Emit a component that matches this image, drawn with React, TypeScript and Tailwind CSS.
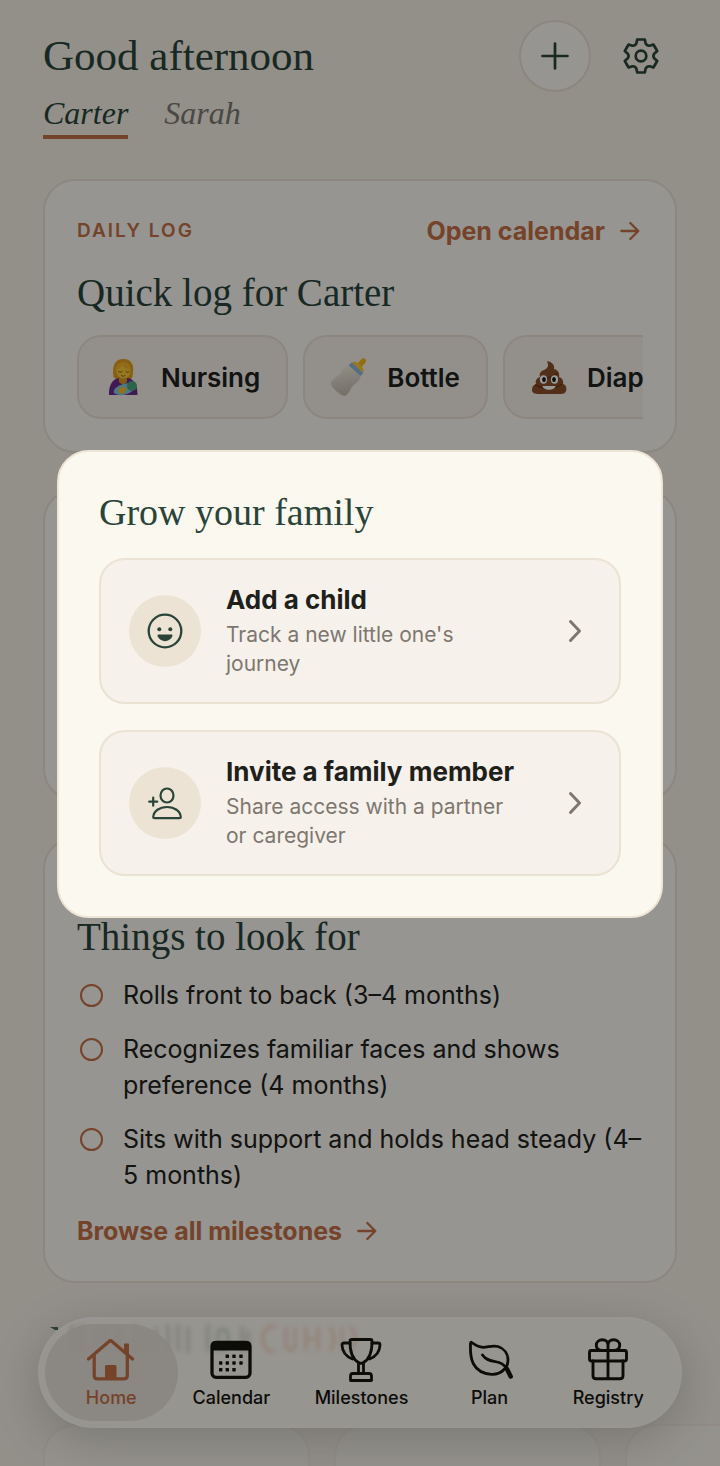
import type { ReactNode } from "react";

const SERIF = "font-['Georgia','Liberation_Serif',serif]";

const MILESTONES = [
  "Rolls front to back (3–4 months)",
  "Recognizes familiar faces and shows preference (4 months)",
  "Sits with support and holds head steady (4–5 months)",
];

function NursingIcon() {
  return (
    <svg viewBox="0 0 36 40" className="h-10 w-9 shrink-0" aria-hidden="true">
      <path d="M8.500 20C7 9 9.500 2 18.500 2c8 0 10.500 6 9.500 13 0 4-1 7-3 8H12z" fill="#e0a01c" />
      <path d="M4 38c-.5-9 3-16 10-17h9c6 1 9.500 7 9.500 17z" fill="#6c2c8c" />
      <path d="M14 18h8v7l-4 3-4-3z" fill="#d9991a" />
      <ellipse cx="18.500" cy="13.500" rx="7" ry="8" fill="#fbc93a" />
      <path d="M10 14c1-7 5-9 9-9 3 0 6 2 7 7-5 0-8-2-9-4-1 3-4 5-7 6z" fill="#f0b42c" />
      <path d="M13.500 14.500c1 1 2.500 1 3.500 0m4 0c1 1 2 1 3 0m-7.500 4c1 1 2.500 1 3.500 0" fill="none" stroke="#8a5512" strokeWidth="1" strokeLinecap="round" />
      <path d="M9 36c-2-4 5-9 15-10l4 7c-4 5-14 7-19 3z" fill="#7fc9dc" />
      <circle cx="27" cy="29" r="5" fill="#4fa37c" />
      <path d="M13 34c2-4 6-5 8-3 1 2-2 6-5 6z" fill="#f7bc2c" />
    </svg>
  );
}

function BottleIcon() {
  return (
    <svg viewBox="1 1 34 38" className="h-10 w-9 shrink-0" aria-hidden="true">
      <defs>
        <linearGradient id="milk" x1="0" y1="0" x2="1" y2="1">
          <stop offset="0" stopColor="#f3eee2" />
          <stop offset="1" stopColor="#bdb6a8" />
        </linearGradient>
      </defs>
      <g transform="rotate(42 18 20)">
        <path d="M15.500 0c0-4 5-4 5 0v5h-5z" fill="#f6b51e" />
        <path d="M11 8c0-5 14-5 14 0z" fill="#ffc930" />
        <path d="M10.500 8h15v5h-15z" fill="#8cb8d8" />
        <path d="M10.500 12h15c3 4 1 7 1 12 0 3 2 7 1 11-1 4-18 4-19 0-1-4 1-8 1-11 0-5-2-8 1-12z" fill="url(#milk)" />
      </g>
    </svg>
  );
}

function DiaperIcon() {
  return (
    <svg viewBox="0 0 36 40" className="h-10 w-9 shrink-0" aria-hidden="true">
      <path
        d="M16 4c5 1 8 4 7 8 4 1 6 4 5 8 3 1 5 4 4 7 3 1 4 4 3 7-1 3-4 3-7 3H8c-4 0-7-1-7-4s1-5 4-6c-1-4 1-6 4-7-1-4 1-6 4-7 4-2 5-4 3-9z"
        fill="#8a4d28"
      />
      <path d="M9 20c5 2 13 1 17-4m-22 12c8 4 20 4 27-1" fill="none" stroke="#6b3618" strokeWidth="1.500" />
      <ellipse cx="12.500" cy="22.500" rx="3.600" ry="4.200" fill="#fff" />
      <ellipse cx="23.500" cy="22.500" rx="3.600" ry="4.200" fill="#fff" />
      <ellipse cx="13" cy="22.500" rx="1.800" ry="2.500" fill="#111" />
      <ellipse cx="23" cy="22.500" rx="1.800" ry="2.500" fill="#111" />
      <path d="M11.500 29h13c-1 5-12 5-13 0z" fill="#fff" />
    </svg>
  );
}

function ArrowRight() {
  return (
    <svg viewBox="0 0 24 24" className="size-6 shrink-0" fill="none" stroke="currentColor" strokeWidth="2.300" strokeLinecap="round" strokeLinejoin="round" aria-hidden="true">
      <path d="M2.300 12h16.700M11.300 4l8 8-8 8" />
    </svg>
  );
}

function Chevron() {
  return (
    <svg viewBox="0 0 32 32" className="size-8 shrink-0 text-[#7d7770]" fill="none" stroke="currentColor" strokeWidth="3" strokeLinecap="round" strokeLinejoin="round" aria-hidden="true">
      <path d="M11.500 6.500 20.500 16l-9 9.500" />
    </svg>
  );
}

function GearIcon() {
  return (
    <svg viewBox="-20 -20 40 40" className="size-10" fill="none" stroke="currentColor" strokeWidth="2.700" strokeLinejoin="round" aria-hidden="true">
      <path d="M-3.800-16.500H3.800L4.600-12.700Q5.800-10 8.700-10.300L12.400-11.500 16.200-5 13.200-2.300Q11.600 0 13.200 2.300L16.200 5 12.400 11.500 8.700 10.300Q5.800 10 4.600 12.700L3.800 16.500H-3.800L-4.600 12.700Q-5.800 10-8.700 10.300L-12.400 11.500-16.200 5-13.200 2.300Q-11.600 0-13.200-2.300L-16.200-5-12.400-11.500-8.700-10.300Q-5.800-10-4.600-12.700Z" />
      <circle r="5.300" />
    </svg>
  );
}

function SmileIcon() {
  return (
    <svg viewBox="-20 -20 40 40" className="size-10" aria-hidden="true">
      <circle r="16.300" fill="none" stroke="currentColor" strokeWidth="2.300" />
      <circle cx="-5.700" cy="-1.800" r="2" fill="currentColor" />
      <circle cx="5.300" cy="-1.800" r="2" fill="currentColor" />
      <path d="M-6.800 3.500H6.800C7.800 3.500 7.500 5 7 6 4 11.500-4 11.500-7 6-7.500 5-7.800 3.500-6.800 3.500Z" fill="currentColor" />
    </svg>
  );
}

function InviteIcon() {
  return (
    <svg viewBox="-20 -20 40 40" className="size-10" fill="none" stroke="currentColor" strokeWidth="2.200" strokeLinecap="round" strokeLinejoin="round" aria-hidden="true">
      <ellipse cx="2" cy="-7.500" rx="6.500" ry="7" />
      <path d="M-10.500 15.200H14.500Q15.800 15.200 15.800 14C15.300 8 9.500 4 2 4S-11.300 8-11.800 14Q-11.800 15.200-10.500 15.200Z" />
      <path d="M-15.800-1.300h8M-11.800-5.300v8" />
    </svg>
  );
}

function NavIcon({ children }: { children: ReactNode }) {
  return (
    <svg viewBox="0 0 48 48" className="size-12" fill="none" stroke="currentColor" strokeWidth="3.300" strokeLinecap="round" strokeLinejoin="round" aria-hidden="true">
      {children}
    </svg>
  );
}

const CALENDAR_DOTS = [
  [20.3, 20.3], [27, 20.3], [34, 20.3],
  [13.7, 27], [20.3, 27], [27, 27], [34, 27],
  [13.7, 33.7], [20.3, 33.7], [27, 33.7],
];

const NAV_ITEMS = [
  {
    label: "Home",
    icon: (
      <NavIcon>
        <path d="M1.500 23 22 5.500Q23.500 4 25 5.500L45.500 23" />
        <path d="M7.200 19.500V39.500Q7.200 42.800 10.500 42.800H37Q40.300 42.800 40.300 39.500V19.500" />
        <path d="M37 8.500q0-1 1-1h3q1 0 1 1V19L37 14.500z" fill="currentColor" stroke="none" />
        <path d="M18 43V30.500Q18 29 19.500 29H28Q29.500 29 29.500 30.500V43z" fill="currentColor" stroke="none" />
      </NavIcon>
    ),
  },
  {
    label: "Calendar",
    icon: (
      <NavIcon>
        <rect x="5" y="6.300" width="38" height="35" rx="4" />
        <path d="M4 14.500V9Q4 5 9 5h30q5 0 5 4v5.500z" fill="currentColor" stroke="none" />
        {CALENDAR_DOTS.map(([x, y]) => (
          <rect key={`${x}-${y}`} x={x - 1.7} y={y - 1.7} width="3.400" height="3.400" rx="0.600" fill="currentColor" stroke="none" />
        ))}
      </NavIcon>
    ),
  },
  {
    label: "Milestones",
    icon: (
      <NavIcon>
        <g strokeWidth="2.800">
          <path d="M15 3.500H33.500Q35 3.500 35 5C35.200 15 33 23 26 26.800Q24 28 22 26.800C15 23 12.800 15 13 5Q13 3.500 15 3.500Z" />
          <path d="M13 7H7Q5 7 5 9C5.300 16 9 20.500 15.500 23M35 7H41Q43 7 43 9C42.700 16 39 20.500 32.500 23" />
          <path d="M21.500 27.500V37.500M26.500 27.500V37.500" />
          <path d="M16 37.500H32Q34.500 37.500 34.500 40V44.500H13.500V40Q13.500 37.500 16 37.500Z" />
        </g>
      </NavIcon>
    ),
  },
  {
    label: "Plan",
    icon: (
      <NavIcon>
        <g strokeWidth="2.800">
          <path d="M5.700 6.500C9 9 12 11 17.300 11.300 22 11.300 26 9 32 10.500 38.500 12.500 42 18 42 24 42 28 41 30.500 38.500 33 34.500 37.500 30 38.500 25.500 38.300 17 37.800 11 34.500 7.500 28 3.500 20.500 4.500 12.500 4.500 7.500Q4.800 5.800 5.700 6.500Z" />
          <path d="M16.500 19C21 25.500 27 24.500 33 26.500 39 28.500 41 32 43 37" />
          <path d="M41 33 44.700 40.500" strokeWidth="4.500" />
        </g>
      </NavIcon>
    ),
  },
  {
    label: "Registry",
    icon: (
      <NavIcon>
        <g strokeWidth="2.900">
          <rect x="5.500" y="14.500" width="37" height="10.500" rx="2" />
          <path d="M9 25V39.500Q9 42.800 12 42.800H36Q39 42.800 39 39.500V25M24 14V42.800" />
          <path d="M24 14.500V9C24 5.500 21.500 3.700 18.500 3.700 15 3.700 12.300 6 12.300 9.300 12.300 12.500 14.500 14.300 18 14.500ZM24 14.500V9C24 5.500 26.500 3.700 29.500 3.700 33 3.700 35.700 6 35.700 9.300 35.700 12.500 33.500 14.300 30 14.500Z" />
        </g>
      </NavIcon>
    ),
  },
];

const LOG_CHIPS = [
  { label: "Nursing", icon: <NursingIcon /> },
  { label: "Bottle", icon: <BottleIcon /> },
  { label: "Diaper", icon: <DiaperIcon /> },
];

const FAMILY_OPTIONS = [
  { title: "Add a child", text: "Track a new little one's journey", icon: <SmileIcon /> },
  { title: "Invite a family member", text: "Share access with a partner or caregiver", icon: <InviteIcon /> },
];

function Card({ children, className }: { children?: ReactNode; className: string }) {
  return (
    <section className={`rounded-[32px] border-2 border-[#eae0d2] bg-[#faf8f2] px-8 ${className}`}>
      {children}
    </section>
  );
}

// Page heading that shows through the frosted tab bar
function FrostedHeading() {
  return (
    <svg viewBox="0 0 320 44" className="absolute top-0 left-2 h-11 w-80" fill="none" aria-hidden="true">
      <defs>
        <filter id="frost" x="-10%" y="-30%" width="120%" height="160%">
          <feGaussianBlur stdDeviation="2" />
        </filter>
      </defs>
      <g filter="url(#frost)" strokeWidth="3">
        <path
          d="M24 6v28M34 6v26M48 10v22M58 8v24M70 8v24q6 3 10-4M88 6v26M98 14v18M108 8v24M120 6v26M130 6v26M140 8v26M160 6v26M170 12q10-6 10 8t-10 10zM194 8v24M200 12v20"
          stroke="#2a4a3e"
          opacity="0.220"
        />
        <path
          d="M222 7q-14 10-2 25h7M222 7h6M238 8v20q4 6 9 0V8M258 8v24M258 20h8M270 8v24M282 8q8 12 0 24M294 8v24M302 7q10 12 0 25"
          stroke="#e08350"
          opacity="0.300"
        />
      </g>
    </svg>
  );
}

export default function App() {
  return (
    <div className="relative h-screen overflow-hidden bg-[#f5f0e7] font-['Inter',sans-serif] text-[#20201b]">
      <main className="px-[43px] pt-5">
        <header>
          <div className="flex items-center justify-between">
            <h1 className={`${SERIF} text-[43px] leading-[48px] text-[#2a4439]`}>Good afternoon</h1>
            <div className="flex gap-3.5 text-[#2a4439]">
              <button type="button" aria-label="Add" className="flex size-[72px] items-center justify-center rounded-full border-2 border-[#eae0d2] bg-[#faf8f2]">
                <svg viewBox="0 0 32 32" className="size-8" stroke="currentColor" strokeWidth="2.700" strokeLinecap="round" aria-hidden="true">
                  <path d="M16 3.500v25M3.500 16h25" />
                </svg>
              </button>
              <button type="button" aria-label="Settings" className="flex size-[72px] items-center justify-center">
                <GearIcon />
              </button>
            </div>
          </div>
          <div className={`${SERIF} flex gap-9 text-[32px] leading-[36px] italic`} role="tablist">
            <button type="button" role="tab" aria-selected="true" className="border-b-4 border-[#c46f47] pt-[3px] pb-1 text-[#2a4439]">
              Carter
            </button>
            <button type="button" role="tab" aria-selected="false" className="border-b-4 border-transparent pt-[3px] pb-1 text-[#7d7770]">
              Sarah
            </button>
          </div>
        </header>

        <div className="mt-10 flex flex-col gap-9">
          <Card className="py-8">
            <div className="flex items-center justify-between text-[#c46f47]">
              <h2 className="text-[19px] leading-9 font-semibold tracking-[2px]">DAILY LOG</h2>
              <a href="#calendar" className="flex items-center gap-3.5 text-[25px] leading-9 font-bold">
                Open calendar
                <ArrowRight />
              </a>
            </div>
            <h3 className={`${SERIF} mt-[22px] text-[39px] leading-[44px] text-[#2a4439]`}>Quick log for Carter</h3>
            <div className="mt-5 flex gap-[15px] overflow-hidden">
              {LOG_CHIPS.map((chip) => (
                <button
                  key={chip.label}
                  type="button"
                  className="flex h-[84px] shrink-0 items-center gap-5 rounded-3xl border-2 border-[#eae0d2] bg-[#f5f0e8] px-[26px] text-[26px] font-semibold"
                >
                  {chip.icon}
                  {chip.label}
                </button>
              ))}
            </div>
          </Card>

          <Card className="h-[312px]" />

          <Card className="pt-[78px] pb-8">
            <h3 className={`${SERIF} text-[39px] leading-10 text-[#2a4439]`}>Things to look for</h3>
            <ul className="mt-5 flex flex-col gap-[18px]">
              {MILESTONES.map((milestone) => (
                <li key={milestone} className="flex gap-5 text-[25px] leading-9">
                  <span className="mt-[7px] ml-[3px] size-[23px] shrink-0 rounded-full border-2 border-[#c46f47]" />
                  {milestone}
                </li>
              ))}
            </ul>
            <a href="#milestones" className="mt-5 flex items-center gap-3.5 text-[25px] leading-9 font-bold text-[#c46f47]">
              Browse all milestones
              <ArrowRight />
            </a>
          </Card>

          <svg viewBox="0 0 32 69" className="h-[69px] w-8" aria-hidden="true">
            <path d="M7 8h8v3h-3z" fill="#4f6a60" />
          </svg>

          <div className="grid auto-cols-[267px] grid-flow-col gap-6">
            <div className="h-24 rounded-[32px] border-2 border-[#eae0d2]/50 bg-[#f8f4ec]" />
            <div className="h-24 rounded-[32px] border-2 border-[#eae0d2]/50 bg-[#f8f4ec]" />
            <div className="h-24 rounded-[32px] border-2 border-[#eae0d2]/50 bg-[#f8f4ec]" />
          </div>
        </div>
      </main>

      <nav aria-label="Main" className="absolute inset-x-0 bottom-[38px] px-[38px]">
        <div className="relative grid h-[111px] grid-cols-[133fr_108fr_153fr_104fr_134fr] overflow-hidden rounded-full border-2 border-[#fffdf8]/60 bg-[#fcf8f1] p-[5px] shadow-[0_12px_50px_rgba(0,0,0,0.180)]">
          <FrostedHeading />
          {NAV_ITEMS.map((item, index) => (
            <a
              key={item.label}
              href={`#${item.label.toLowerCase()}`}
              className={`relative flex flex-col items-center justify-center gap-0.5 rounded-full text-[18px] leading-6 font-medium ${
                index === 0 ? "bg-[#e6e0d8]/90 text-[#c46f47]" : "text-[#15140f]"
              }`}
            >
              {item.icon}
              {item.label}
            </a>
          ))}
        </div>
      </nav>

      <div className="absolute inset-0 flex items-center bg-black/40 px-[57px] pb-[99px]">
        <div role="dialog" aria-modal="true" aria-labelledby="family-title" className="w-full rounded-[32px] border-2 border-[#efe5d6] bg-[#fbf8f0] p-10">
          <h2 id="family-title" className={`${SERIF} text-[38px] leading-10 text-[#2a4439]`}>
            Grow your family
          </h2>
          <div className="mt-[26px] flex flex-col gap-[26px]">
            {FAMILY_OPTIONS.map((option) => (
              <button
                key={option.title}
                type="button"
                className="flex items-center gap-[25px] rounded-[26px] border-2 border-[#eae2d3] bg-[#f6f1ea] px-7 py-6 text-left"
              >
                <span className="flex size-[72px] shrink-0 items-center justify-center rounded-full bg-[#ece3d4] text-[#2a4439]">
                  {option.icon}
                </span>
                <span className="flex-1 pr-2">
                  <span className="block text-[26px] leading-8 font-bold">{option.title}</span>
                  <span className="mt-1 block text-[21px] leading-[29px] text-[#7d7770]">{option.text}</span>
                </span>
                <Chevron />
              </button>
            ))}
          </div>
        </div>
      </div>
    </div>
  );
}
